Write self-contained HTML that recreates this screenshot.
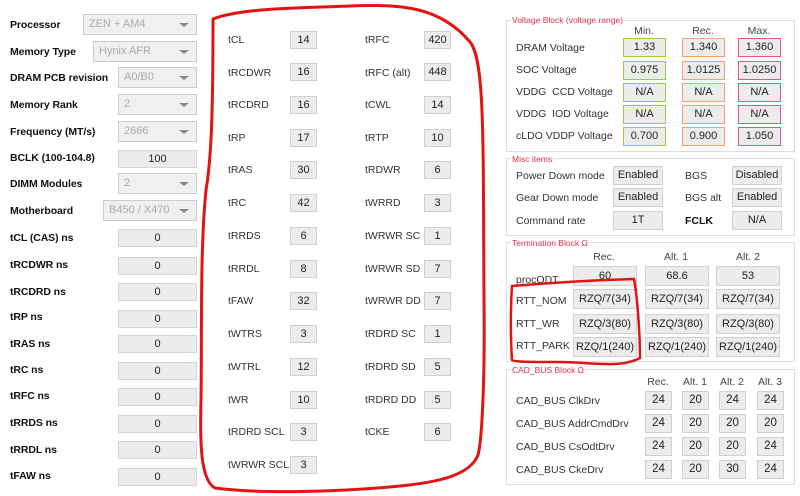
<!DOCTYPE html>
<html><head><meta charset="utf-8"><style>
body{margin:0;width:800px;height:496px;background:#fff;position:relative;overflow:hidden;font-family:"Liberation Sans",sans-serif;font-size:11px;color:#222}
div{position:absolute;box-sizing:border-box}
.L{left:10px;font-weight:bold;font-size:10.5px;color:#111;line-height:14px;letter-spacing:-0.1px}
.d{left:118px;width:79px;height:21px;border:1px solid #ccc;background:#f0f0f0;color:#aaa;padding:3px 0 0 5px;font-size:11px}
.d:after{content:"";position:absolute;right:7px;top:8px;border-left:5px solid transparent;border-right:5px solid transparent;border-top:4px solid #888}
.t{left:118px;width:79px;height:18px;border:1px solid #d4d4d4;background:#ececec;text-align:center;line-height:16px;font-size:11px;color:#222}
.l{font-size:10.5px;color:#333;line-height:14px;white-space:nowrap}
.b{width:27px;height:18px;border:1px solid #d0d0d0;background:#ececec;text-align:center;line-height:16px;font-size:11px;color:#222}
.g{border:1px solid #ddd}
.ti{font-size:8.5px;color:#e0304a;background:#fff;padding:0 1px;line-height:10px}
.v{width:43px;height:19px;background:#ececec;text-align:center;line-height:16px;font-size:11px}
.gr{border:1.5px solid #9acb3c}.or{border:1.5px solid #f4a070}.pk{border:1.5px solid #e0587a}
.m{width:50px;height:19px;border:1px solid #d0d0d0;background:#ececec;text-align:center;line-height:17px;font-size:11px}
.r{width:64px;height:20px;border:1px solid #d0d0d0;background:#ececec;text-align:center;line-height:18px;font-size:11px}
.c{width:27px;height:19px;border:1px solid #d0d0d0;background:#ececec;text-align:center;line-height:17px;font-size:11.5px}
.h{font-size:10.5px;color:#444;text-align:center;width:44px}
</style></head><body>
<div class="L" style="top:18px">Processor</div><div class="d" style="top:14px;left:83px;width:114px">ZEN + AM4</div>
<div class="L" style="top:45px">Memory Type</div><div class="d" style="top:41px;left:93px;width:104px">Hynix AFR</div>
<div class="L" style="top:71px">DRAM PCB revision</div><div class="d" style="top:67px">A0/B0</div>
<div class="L" style="top:98px">Memory Rank</div><div class="d" style="top:94px">2</div>
<div class="L" style="top:125px">Frequency (MT/s)</div><div class="d" style="top:121px">2666</div>
<div class="L" style="top:151px">BCLK (100-104.8)</div><div class="t" style="top:150px">100</div>
<div class="L" style="top:177px">DIMM Modules</div><div class="d" style="top:173px">2</div>
<div class="L" style="top:204px">Motherboard</div><div class="d" style="top:200px;left:103px;width:94px">B450 / X470</div>
<div class="L" style="top:231px">tCL (CAS) ns</div><div class="t" style="top:229px">0</div>
<div class="L" style="top:258px">tRCDWR ns</div><div class="t" style="top:257px">0</div>
<div class="L" style="top:285px">tRCDRD ns</div><div class="t" style="top:283px">0</div>
<div class="L" style="top:310px">tRP ns</div><div class="t" style="top:310px">0</div>
<div class="L" style="top:337px">tRAS ns</div><div class="t" style="top:335px">0</div>
<div class="L" style="top:363px">tRC ns</div><div class="t" style="top:362px">0</div>
<div class="L" style="top:389px">tRFC ns</div><div class="t" style="top:388px">0</div>
<div class="L" style="top:416px">tRRDS ns</div><div class="t" style="top:415px">0</div>
<div class="L" style="top:443px">tRRDL ns</div><div class="t" style="top:441px">0</div>
<div class="L" style="top:469px">tFAW ns</div><div class="t" style="top:468px">0</div>
<div class="l" style="left:228px;top:33px">tCL</div><div class="b" style="left:290px;top:31px">14</div>
<div class="l" style="left:228px;top:66px">tRCDWR</div><div class="b" style="left:290px;top:63px">16</div>
<div class="l" style="left:228px;top:98px">tRCDRD</div><div class="b" style="left:290px;top:96px">16</div>
<div class="l" style="left:228px;top:131px">tRP</div><div class="b" style="left:290px;top:129px">17</div>
<div class="l" style="left:228px;top:163px">tRAS</div><div class="b" style="left:290px;top:161px">30</div>
<div class="l" style="left:228px;top:196px">tRC</div><div class="b" style="left:290px;top:194px">42</div>
<div class="l" style="left:228px;top:229px">tRRDS</div><div class="b" style="left:290px;top:227px">6</div>
<div class="l" style="left:228px;top:262px">tRRDL</div><div class="b" style="left:290px;top:260px">8</div>
<div class="l" style="left:228px;top:294px">tFAW</div><div class="b" style="left:290px;top:292px">32</div>
<div class="l" style="left:228px;top:327px">tWTRS</div><div class="b" style="left:290px;top:325px">3</div>
<div class="l" style="left:228px;top:360px">tWTRL</div><div class="b" style="left:290px;top:358px">12</div>
<div class="l" style="left:228px;top:393px">tWR</div><div class="b" style="left:290px;top:391px">10</div>
<div class="l" style="left:228px;top:425px">tRDRD SCL</div><div class="b" style="left:290px;top:423px">3</div>
<div class="l" style="left:228px;top:458px">tWRWR SCL</div><div class="b" style="left:290px;top:456px">3</div>
<div class="l" style="left:365px;top:33px">tRFC</div><div class="b" style="left:424px;top:31px">420</div>
<div class="l" style="left:365px;top:66px">tRFC (alt)</div><div class="b" style="left:424px;top:63px">448</div>
<div class="l" style="left:365px;top:98px">tCWL</div><div class="b" style="left:424px;top:96px">14</div>
<div class="l" style="left:365px;top:131px">tRTP</div><div class="b" style="left:424px;top:129px">10</div>
<div class="l" style="left:365px;top:163px">tRDWR</div><div class="b" style="left:424px;top:161px">6</div>
<div class="l" style="left:365px;top:196px">tWRRD</div><div class="b" style="left:424px;top:194px">3</div>
<div class="l" style="left:365px;top:229px">tWRWR SC</div><div class="b" style="left:424px;top:227px">1</div>
<div class="l" style="left:365px;top:262px">tWRWR SD</div><div class="b" style="left:424px;top:260px">7</div>
<div class="l" style="left:365px;top:294px">tWRWR DD</div><div class="b" style="left:424px;top:292px">7</div>
<div class="l" style="left:365px;top:327px">tRDRD SC</div><div class="b" style="left:424px;top:325px">1</div>
<div class="l" style="left:365px;top:360px">tRDRD SD</div><div class="b" style="left:424px;top:358px">5</div>
<div class="l" style="left:365px;top:393px">tRDRD DD</div><div class="b" style="left:424px;top:391px">5</div>
<div class="l" style="left:365px;top:425px">tCKE</div><div class="b" style="left:424px;top:423px">6</div>
<div class="g" style="left:506px;top:20px;width:289px;height:132px"></div>
<div class="ti" style="left:511px;top:15px">Voltage Block (voltage range)</div>
<div class="h" style="left:622px;top:25px">Min.</div><div class="h" style="left:681px;top:25px">Rec.</div><div class="h" style="left:737px;top:25px">Max.</div>
<div class="l" style="left:516px;top:41px">DRAM Voltage</div>
<div class="l" style="left:516px;top:63px">SOC Voltage</div>
<div class="l" style="left:516px;top:85px">VDDG&nbsp; CCD Voltage</div>
<div class="l" style="left:516px;top:107px">VDDG&nbsp; IOD Voltage</div>
<div class="l" style="left:516px;top:129px">cLDO VDDP Voltage</div>
<div class="v gr" style="left:623px;top:38px">1.33</div><div class="v or" style="left:682px;top:38px">1.340</div><div class="v pk" style="left:738px;top:38px">1.360</div>
<div class="v gr" style="left:623px;top:61px">0.975</div><div class="v or" style="left:682px;top:61px">1.0125</div><div class="v pk" style="left:738px;top:61px">1.0250</div>
<div class="v gr" style="left:623px;top:83px">N/A</div><div class="v or" style="left:682px;top:83px">N/A</div><div class="v pk" style="left:738px;top:83px">N/A</div>
<div class="v gr" style="left:623px;top:105px">N/A</div><div class="v or" style="left:682px;top:105px">N/A</div><div class="v pk" style="left:738px;top:105px">N/A</div>
<div class="v gr" style="left:623px;top:127px">0.700</div><div class="v or" style="left:682px;top:127px">0.900</div><div class="v pk" style="left:738px;top:127px">1.050</div>
<div class="g" style="left:506px;top:158px;width:289px;height:78px"></div>
<div class="ti" style="left:511px;top:154px">Misc items</div>
<div class="l" style="left:516px;top:169px">Power Down mode</div><div class="m" style="left:613px;top:166px">Enabled</div>
<div class="l" style="left:685px;top:169px">BGS</div><div class="m" style="left:732px;top:166px">Disabled</div>
<div class="l" style="left:516px;top:191px">Gear Down mode</div><div class="m" style="left:613px;top:188px">Enabled</div>
<div class="l" style="left:685px;top:191px">BGS alt</div><div class="m" style="left:732px;top:188px">Enabled</div>
<div class="l" style="left:516px;top:214px">Command rate</div><div class="m" style="left:613px;top:211px">1T</div>
<div class="l" style="left:685px;top:214px;font-weight:bold;color:#111">FCLK</div><div class="m" style="left:732px;top:211px">N/A</div>
<div class="g" style="left:506px;top:242px;width:289px;height:120px"></div>
<div class="ti" style="left:511px;top:238px">Termination Block Ω</div>
<div class="h" style="left:582px;top:251px">Rec.</div><div class="h" style="left:654px;top:251px">Alt. 1</div><div class="h" style="left:726px;top:251px">Alt. 2</div>
<div class="l" style="left:516px;top:273px">procODT</div>
<div class="r" style="left:573px;top:266px">60</div><div class="r" style="left:645px;top:266px">68.6</div><div class="r" style="left:716px;top:266px">53</div>
<div class="l" style="left:516px;top:294px">RTT_NOM</div>
<div class="r" style="left:573px;top:289px">RZQ/7(34)</div><div class="r" style="left:645px;top:289px">RZQ/7(34)</div><div class="r" style="left:716px;top:289px">RZQ/7(34)</div>
<div class="l" style="left:516px;top:317px">RTT_WR</div>
<div class="r" style="left:573px;top:314px">RZQ/3(80)</div><div class="r" style="left:645px;top:314px">RZQ/3(80)</div><div class="r" style="left:716px;top:314px">RZQ/3(80)</div>
<div class="l" style="left:516px;top:339px">RTT_PARK</div>
<div class="r" style="left:573px;top:337px">RZQ/1(240)</div><div class="r" style="left:645px;top:337px">RZQ/1(240)</div><div class="r" style="left:716px;top:337px">RZQ/1(240)</div>
<div class="g" style="left:506px;top:369px;width:289px;height:116px"></div>
<div class="ti" style="left:511px;top:365px">CAD_BUS Block Ω</div>
<div class="h" style="left:636px;top:376px">Rec.</div><div class="h" style="left:673px;top:376px">Alt. 1</div><div class="h" style="left:710px;top:376px">Alt. 2</div><div class="h" style="left:748px;top:376px">Alt. 3</div>
<div class="l" style="left:516px;top:394px">CAD_BUS ClkDrv</div>
<div class="l" style="left:516px;top:417px">CAD_BUS AddrCmdDrv</div>
<div class="l" style="left:516px;top:440px">CAD_BUS CsOdtDrv</div>
<div class="l" style="left:516px;top:463px">CAD_BUS CkeDrv</div>
<div class="c" style="left:645px;top:391px">24</div><div class="c" style="left:682px;top:391px">20</div><div class="c" style="left:719px;top:391px">24</div><div class="c" style="left:757px;top:391px">24</div>
<div class="c" style="left:645px;top:414px">24</div><div class="c" style="left:682px;top:414px">20</div><div class="c" style="left:719px;top:414px">20</div><div class="c" style="left:757px;top:414px">20</div>
<div class="c" style="left:645px;top:437px">24</div><div class="c" style="left:682px;top:437px">20</div><div class="c" style="left:719px;top:437px">20</div><div class="c" style="left:757px;top:437px">24</div>
<div class="c" style="left:645px;top:460px">24</div><div class="c" style="left:682px;top:460px">20</div><div class="c" style="left:719px;top:460px">30</div><div class="c" style="left:757px;top:460px">24</div>
<svg style="position:absolute;left:0;top:0" width="800" height="496" viewBox="0 0 800 496">
<path d="M213,19 C240,8 300,8 350,6 C400,4 440,6 470,42 C485,60 483,140 484,300 C485,380 482,440 478,455 C470,475 440,482 400,486 C340,492 260,494 215,488 C200,480 200,440 201,400 C202,330 200,250 206,190 C211,160 213,120 213,19 Z" fill="none" stroke="#e21313" stroke-width="3" stroke-linejoin="round"/>
<path d="M512,286 C560,282 600,280 634,279 C638,300 640,340 640,358 C620,368 600,363 560,362 C530,362 514,362 512,360 C510,330 511,300 512,286 Z" fill="none" stroke="#e21313" stroke-width="2.5"/>
</svg>
</body></html>
